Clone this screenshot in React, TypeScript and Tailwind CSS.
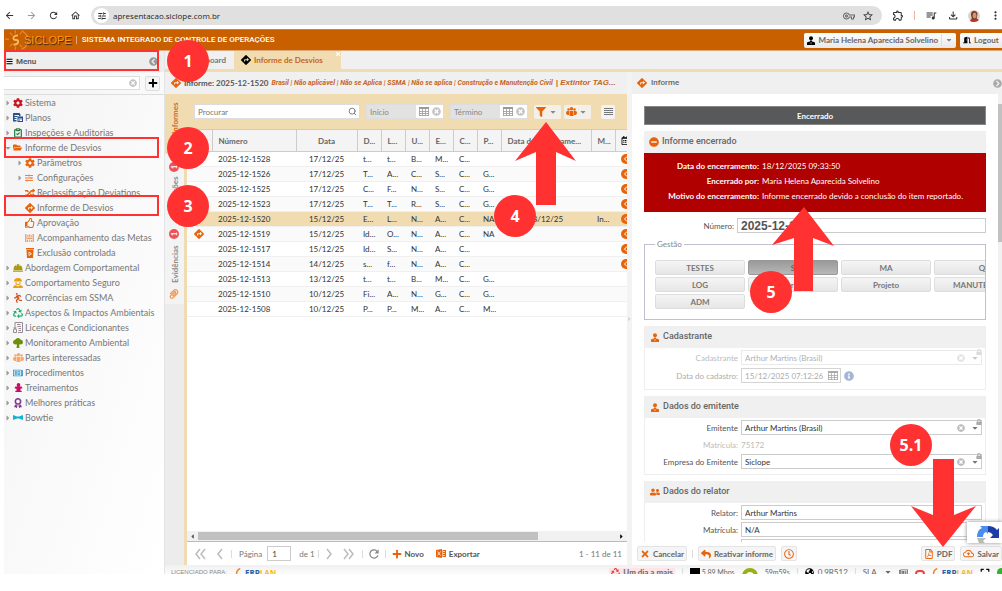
import type { ReactNode } from "react";
import { ClipboardCheck, Search } from "lucide-react";
import {
  MdArrowBack,
  MdArrowForward,
  MdRefresh,
  MdOutlineHome,
  MdTune,
  MdOutlineVpnKey,
  MdStarBorder,
  MdOutlineExtension,
  MdQueueMusic,
  MdOutlineFileDownload,
  MdMoreVert,
  MdOutlineCloudUpload,
} from "react-icons/md";
import {
  FaDirections,
  FaCog,
  FaRandom,
  FaRegThumbsUp,
  FaFilter,
  FaRecycle,
  FaTimes,
  FaPlus,
  FaReply,
  FaRegClock,
  FaPaperclip,
  FaUserFriends,
  FaCaretDown,
  FaCaretRight,
  FaFolderOpen,
  FaHardHat,
  FaRegFilePdf,
  FaRegNewspaper,
  FaAward,
  FaTimesCircle,
  FaInfoCircle,
  FaLock,
  FaSlidersH,
  FaRunning,
  FaChevronCircleLeft,
  FaChevronCircleRight,
  FaMinusCircle,
  FaGlobeAmericas,
  FaExpand,
  FaDoorOpen,
  FaBars,
  FaRegCalendarAlt,
} from "react-icons/fa";

interface TreeItem {
  label: string;
  icon: ReactNode;
  level?: number;
  leaf?: boolean;
  open?: boolean;
}

const tree: TreeItem[] = [
  { label: "Sistema", icon: <FaCog className="text-[#c8141e]" /> },
  { label: "Planos", icon: <PlansIcon /> },
  { label: "Inspeções e Auditorias", icon: <ClipboardCheck className="size-[10px] text-[#2f7d46]" strokeWidth={3} /> },
  { label: "Informe de Desvios", icon: <FaFolderOpen className="text-[9px] text-[#e8640c]" />, open: true },
  { label: "Parâmetros", icon: <FaCog className="text-[#e8640c]" />, level: 1 },
  { label: "Configurações", icon: <FaSlidersH className="text-[8px] text-[#ee8040]" />, level: 1 },
  { label: "Reclassificação Deviations", icon: <FaRandom className="text-[#e8640c]" />, level: 1, leaf: true },
  { label: "Informe de Desvios", icon: <FaDirections className="text-[#e8640c]" />, level: 1, leaf: true },
  { label: "Aprovação", icon: <FaRegThumbsUp className="text-[#e8640c]" />, level: 1, leaf: true },
  { label: "Acompanhamento das Metas", icon: <GoalsIcon />, level: 1, leaf: true },
  { label: "Exclusão controlada", icon: <BinIcon />, level: 1, leaf: true },
  { label: "Abordagem Comportamental", icon: <FaHardHat className="text-[#a89a10]" /> },
  { label: "Comportamento Seguro", icon: <WorkerIcon /> },
  { label: "Ocorrências em SSMA", icon: <FaRunning className="-scale-x-100 text-[#d4501c]" /> },
  { label: "Aspectos & Impactos Ambientais", icon: <FaRecycle className="text-[#1cb070]" /> },
  { label: "Licenças e Condicionantes", icon: <LicenseIcon /> },
  { label: "Monitoramento Ambiental", icon: <TreeIcon /> },
  { label: "Partes interessadas", icon: <GroupIcon className="text-[#f8a868]" /> },
  { label: "Procedimentos", icon: <FaRegNewspaper className="-scale-x-100 text-[#2c98cc]" /> },
  { label: "Treinamentos", icon: <TrainerIcon /> },
  { label: "Melhores práticas", icon: <FaAward className="text-[#803890]" /> },
  { label: "Bowtie", icon: <BowtieIcon /> },
];

// número, data, D, L, U, E, C, P, encerramento, M, status
const rows = [
  ["2025-12-1528", "17/12/25", "t...", "t...", "B...", "M...", "C...", "", "", "", "i"],
  ["2025-12-1526", "17/12/25", "T...", "A...", "C...", "S...", "C...", "G...", "", "", "i"],
  ["2025-12-1525", "17/12/25", "C...", "F...", "N...", "S...", "C...", "G...", "", "", "i"],
  ["2025-12-1523", "17/12/25", "T...", "T...", "R...", "S...", "C...", "G...", "", "", "i"],
  ["2025-12-1520", "15/12/25", "E...", "L...", "N...", "A...", "C...", "NA", "18/12/25", "In...", "i"],
  ["2025-12-1519", "15/12/25", "Id...", "O...", "N...", "A...", "C...", "NA", "", "", "i"],
  ["2025-12-1517", "15/12/25", "Id...", "S...", "N...", "A...", "C...", "", "", "", "i"],
  ["2025-12-1514", "14/12/25", "s...", "f...", "N...", "A...", "C...", "", "", "", "i"],
  ["2025-12-1513", "13/12/25", "t...", "t...", "B...", "M...", "C...", "G...", "", "", ""],
  ["2025-12-1510", "10/12/25", "Fi...", "A...", "N...", "G...", "C...", "G...", "", "", ""],
  ["2025-12-1508", "10/12/25", "P...", "P...", "M...", "A...", "C...", "M...", "", "", ""],
];

const headers = ["D...", "L...", "U...", "E...", "C...", "P..."];

function BowtieIcon() {
  return (
    <svg viewBox="0 0 20 10" className="h-[5px] w-[10px]" fill="#10b4d0" aria-hidden="true">
      <path d="M0 0l8 3v4l-8 3zM20 0l-8 3v4l8 3zM8 3h4v4H8z" />
    </svg>
  );
}

function PlansIcon() {
  return (
    <svg viewBox="0 0 20 18" className="h-[9px] w-[10px]" fill="#24508c" aria-hidden="true">
      <path d="M1 0h12l2 3v3h-3V4H3v2h6v2H3v2h4v2H3v2h4v3H0V1z" />
      <path d="M9 7h11v11H9zM11 11v5h7v-5z" fillRule="evenodd" />
      <path d="M12 12h2v1h-2zM15 12h2v1h-2zM12 14h2v1h-2z" />
    </svg>
  );
}

function GoalsIcon() {
  return (
    <svg viewBox="0 0 20 18" className="h-[8px] w-[9px]" fill="#f0a070" aria-hidden="true">
      <path d="M0 0h3v18H0zM17 0h3v18h-3zM4 3h3v3H4zM8 1h4v5H8zM13 3h3v3h-3zM4 8h12v3H4zM4 13h3v5H4zM9 12h2v6H9zM13 13h3v5h-3z" />
    </svg>
  );
}

function BinIcon() {
  return (
    <svg viewBox="0 0 16 20" className="ml-px h-[10px] w-2" aria-hidden="true">
      <path d="M0 0h16v3H0zM1 4h14l-1 16H2z" fill="#e8640c" />
      <path d="M6 8l5 3.500-5 3.500z" fill="none" stroke="#fff" strokeWidth="1.500" />
    </svg>
  );
}

function WorkerIcon() {
  return (
    <svg viewBox="0 0 20 20" className="size-[10px]" fill="#e8a010" aria-hidden="true">
      <path d="M2 6q1-6 8-6t8 6v1H2zM5 8h2v3q3 3 6 0V8h2v4q-5 5-10 0zM0 20q0-5 5-6l5 3 5-3q5 1 5 6z" />
    </svg>
  );
}

function LicenseIcon() {
  return (
    <svg viewBox="0 0 20 22" className="h-[11px] w-[10px]" fill="none" stroke="#8c8088" strokeWidth="1.800" aria-hidden="true">
      <path d="M4 9V1h15v20h-9M8 5h7M9 9h7M11 13h5M11 17h5M1 21v-6q3-3 6 0v6z" />
      <circle cx="4" cy="12" r="2" />
    </svg>
  );
}

function TreeIcon() {
  return (
    <svg viewBox="0 0 20 20" className="size-[10px]" fill="#6c9008" aria-hidden="true">
      <path d="M10 0q4 0 5 3 5 1 5 5 0 5-6 5h-2l1 7H7l1-7H6q-6 0-6-5 0-4 5-5 1-3 5-3z" />
    </svg>
  );
}

function GroupIcon({ className = "" }: { className?: string }) {
  return (
    <svg viewBox="0 0 22 18" className={`h-[9px] w-[11px] shrink-0 ${className}`} fill="currentColor" aria-hidden="true">
      <circle cx="11" cy="3.500" r="3.500" />
      <circle cx="5" cy="5" r="2.500" />
      <circle cx="17" cy="5" r="2.500" />
      <path d="M7 8h8v10H7zM0 11q0-3 3-3h3v8H3q-3-1-3-5zM22 11q0-3-3-3h-3v8h3q3-1 3-5z" />
    </svg>
  );
}

function TrainerIcon() {
  return (
    <svg viewBox="0 0 20 20" className="ml-px size-[9px]" fill="#cc0868" aria-hidden="true">
      <path d="M10 0q4 0 4 4t-2 4h5l2 4h-4l-1 5h3v3H3v-3h3l-1-5H1l2-4h5Q6 8 6 4t4-4z" />
    </svg>
  );
}

function ExcelIcon() {
  return (
    <svg viewBox="0 0 20 18" className="h-[9px] w-[10px] shrink-0" aria-hidden="true">
      <path d="M0 2l12-2v18L0 16zM13 2h7v14h-7z" fill="#e8640c" />
      <path d="M3 5l6 8M9 5l-6 8M14 5h4M14 9h4M14 13h4" stroke="#fff" strokeWidth="1.500" />
    </svg>
  );
}

function GridIcon({ className = "" }: { className?: string }) {
  return (
    <svg viewBox="0 0 10 9" className={`h-[9px] w-[10px] shrink-0 ${className}`} aria-hidden="true">
      <path d="M0 0h10v2H0z" fill="currentColor" />
      <path d="M.5 2v7M3.500 2v7M6.500 2v7M9.500 2v7M0 4.500h10M0 6.500h10M0 8.500h10" fill="none" stroke="currentColor" strokeWidth=".8" />
    </svg>
  );
}

function UserIcon({ className = "" }: { className?: string }) {
  return (
    <svg viewBox="0 0 16 18" className={`h-[9px] w-2 shrink-0 ${className}`} fill="currentColor" aria-hidden="true">
      <circle cx="8" cy="4.500" r="4" />
      <path d="M6 9h4v2l4.500 1q1.500.5 1.500 2v4H0v-4q0-1.500 1.500-2l4.500-1z" />
      <path d="M8 12v4" stroke="#fff" />
    </svg>
  );
}

function StatusDot() {
  return (
    <svg viewBox="0 0 20 20" className="size-[10px]" aria-hidden="true">
      <circle cx="10" cy="10" r="10" fill="#e8640c" />
      <path d="M12 5L7 10l5 5" fill="none" stroke="#fff" strokeWidth="2" />
    </svg>
  );
}

function Chevrons({ d }: { d: string }) {
  return (
    <svg viewBox="0 0 12 12" className="inline size-3" fill="none" stroke="currentColor" strokeWidth="1.500" aria-hidden="true">
      <path d={d} />
    </svg>
  );
}

function Separator() {
  return <span className="h-2 w-px shrink-0 bg-[#ddd]" />;
}

function Erplan() {
  return (
    <span className="flex items-start gap-1 font-['Open_Sans',sans-serif] text-[8px] leading-[9px] font-bold">
      <svg viewBox="0 0 8 12" className="h-[10px] w-[6px]" fill="none" stroke="#f08830" strokeWidth="2" aria-hidden="true">
        <path d="M7 0Q0 3 3 11" />
      </svg>
      <span>
        <span className="text-[#2460a8]">ERP</span>
        <span className="text-[#f8b820]">LAN</span>
      </span>
    </span>
  );
}

function BrowserBar() {
  return (
    <div className="flex h-[29px] shrink-0 items-center pt-[2px] text-[#333]">
      <div className="flex w-[91px] shrink-0 items-center gap-[11px] pl-1 text-[11px]">
        <button aria-label="Voltar"><MdArrowBack /></button>
        <button aria-label="Avançar" className="text-[#999]"><MdArrowForward /></button>
        <button aria-label="Recarregar"><MdRefresh /></button>
        <button aria-label="Página inicial"><MdOutlineHome /></button>
      </div>
      <div className="flex h-[19px] min-w-0 flex-1 items-center rounded-full bg-[#e0e0e0] pr-2 pl-[3px]">
        <span className="mr-1 flex size-[15px] shrink-0 items-center justify-center rounded-full bg-white text-[10px]">
          <MdTune />
        </span>
        <input
          aria-label="Endereço"
          className="min-w-0 flex-1 bg-transparent font-['Open_Sans',sans-serif] text-[8px] text-[#222] outline-none"
          defaultValue="apresentacao.siclope.com.br"
        />
        <MdOutlineVpnKey className="mr-[7px] text-[12px] text-[#666]" />
        <MdStarBorder className="text-[12px]" />
      </div>
      <div className="flex w-[120px] shrink-0 items-center pl-[10px] text-[13px]">
        <MdOutlineExtension />
        <span className="mx-[10px] h-[9px] w-px bg-[#f4b0a4]" />
        <MdQueueMusic />
        <MdOutlineFileDownload className="ml-[9px]" />
        <svg viewBox="0 0 12 12" className="ml-[9px] size-3 shrink-0" aria-hidden="true">
          <circle cx="6" cy="6" r="6" fill="#d8d4d0" />
          <path d="M2 11q1-3 4-3t5 2q-2 2-5 2t-4-1z" fill="#c03020" />
          <path d="M3 5q0-4 3-4t3.500 3l-1 5H4z" fill="#6a3420" />
          <ellipse cx="6.500" cy="5.500" rx="2" ry="3" fill="#d89070" />
        </svg>
        <MdMoreVert className="ml-[9px] shrink-0" />
      </div>
    </div>
  );
}

function AppHeader() {
  return (
    <header className="flex h-[22px] shrink-0 items-center overflow-hidden border-t border-b border-t-[#b08868] border-b-[#dfa878] bg-[#c86000]">
      <svg viewBox="0 0 30 22" className="h-5 w-[28px] shrink-0" fill="none" stroke="#e08c38" aria-hidden="true">
        <path d="M19 1q8 4 7 11t-7 9" strokeWidth="1.500" />
        <path d="M1 10h4M6 3l3 3M12 0v4M19 2l-2 3M6 18l3-3M12 22v-4M19 19l-2-3" strokeWidth="1.200" />
        <path d="M15 6q-5 0-5 3 0 2 3 2t2 3q-1 2-5 2" strokeWidth="2" stroke="#f8b868" />
      </svg>
      <span className="-ml-2 font-['Liberation_Sans',sans-serif] text-[11px] text-[#ff9a10] [text-shadow:1px_1px_1px_#222]">
        SICLOPE
      </span>
      <span className="mr-[5px] ml-1 h-2 w-px bg-[#e0a878]" />
      <span className="truncate font-['Roboto',sans-serif] text-[8px] font-medium text-white">
        SISTEMA INTEGRADO DE CONTROLE DE OPERAÇÕES
      </span>
      <div className="ml-auto flex h-[15px] shrink-0 gap-1 text-[8px] font-bold text-[#666]">
        <button className="flex items-center rounded-xs bg-linear-to-b from-white to-[#e8e8e8] pl-[3px]">
          <UserIcon className="mr-[3px] text-black" />
          Maria Helena Aparecida Solvelino
          <span className="mx-[3px] h-3 w-px bg-[#ddd]" />
          <FaCaretDown className="mr-[3px] text-[#888]" />
        </button>
        <button className="flex w-[42px] items-center gap-[3px] rounded-l-xs bg-linear-to-b from-white to-[#e8e8e8] pl-[3px]">
          <FaDoorOpen className="shrink-0 text-black" />
          Logout
        </button>
      </div>
    </header>
  );
}

function Sidebar() {
  return (
    <aside className="flex w-[161px] shrink-0 flex-col border-r border-[#e4e4e4] bg-linear-to-br from-[#f3f3f3] to-white">
      <div className="flex h-[21px] shrink-0 items-center bg-[#eee] pl-[2px] text-[#555]">
        <FaBars className="text-[7px] text-black" />
        <span className="ml-[3px] font-['Roboto',sans-serif] text-[8px] font-semibold">Menu</span>
        <button aria-label="Recolher menu" className="mr-[6px] ml-auto text-[9px] text-[#999]">
          <FaChevronCircleLeft />
        </button>
      </div>
      <div className="flex h-[23px] shrink-0 items-center gap-[5px] border-b border-[#ddd] pr-1">
        <div className="flex h-[14px] min-w-0 flex-1 items-center border border-l-0 border-[#ddd] bg-white pr-[2px]">
          <input aria-label="Filtrar menu" className="min-w-0 flex-1 bg-transparent text-[8px] outline-none" />
          <FaTimesCircle className="text-[8px] text-[#c4c4c4]" />
        </div>
        <button aria-label="Adicionar" className="flex size-[15px] items-center justify-center rounded-xs border border-[#ddd] bg-[#f5f5f5] text-[10px] text-black">
          <FaPlus />
        </button>
      </div>
      <ul className="text-[9px] text-[#777]">
        {tree.map((item, i) => (
          <li key={i} className={item.level ? "flex h-[15px] items-center pl-3" : "flex h-[15px] items-center"}>
            <span className="w-[9px] shrink-0 text-[8px] text-[#999]">
              {!item.leaf && (item.open ? <FaCaretDown /> : <FaCaretRight />)}
            </span>
            <span className="flex w-3 shrink-0 items-center justify-start text-[10px]">{item.icon}</span>
            <a href="#" className="whitespace-nowrap">{item.label}</a>
          </li>
        ))}
      </ul>
    </aside>
  );
}

function SideTabs() {
  return (
    <div className="w-[19px] shrink-0 bg-[#ececec] text-[8px] font-bold text-[#888]">
      <button className="flex h-[60px] w-full rotate-180 items-center justify-end bg-[#f0dcb0] pb-2 text-[#d0691c] [writing-mode:vertical-rl]">
        Informes
      </button>
      <button className="flex h-[72px] w-full rotate-180 items-center justify-end gap-1 bg-[#f3f3f3] pb-2 [writing-mode:vertical-rl]">
        Ações <span className="flex size-[10px] items-center justify-center rounded-full bg-[#f05058] text-[7px] text-white">1</span>
      </button>
      <button className="flex h-[78px] w-full rotate-180 items-center justify-end gap-[6px] bg-[#f3f3f3] pb-[3px] [writing-mode:vertical-rl]">
        <FaPaperclip className="text-[10px] text-[#f09858]" />
        Evidências
        <span className="flex size-[10px] items-center justify-center rounded-full bg-[#f05058] text-[7px] text-white">1</span>
      </button>
    </div>
  );
}

function DateField({ label }: { label: string }) {
  return (
    <div className="ml-[6px] flex h-[15px] w-[78px] shrink-0 items-center border border-[#ddd] bg-white pr-[2px] text-[#999]">
      <input
        aria-label={label}
        placeholder={label}
        className="mr-[3px] h-full w-[49px] min-w-0 bg-[#e2e2e2] pl-[3px] text-[8px] outline-none placeholder:text-[#888]"
      />
      <GridIcon />
      <FaTimesCircle className="ml-[3px] shrink-0 text-[9px] text-[#c4c4c4]" />
    </div>
  );
}

function Toolbar() {
  return (
    <div className="flex h-[35px] shrink-0 items-center bg-[#f0dcb0] pr-3 pl-[7px]">
      <div className="flex h-[15px] min-w-0 flex-1 items-center border border-[#ddd] bg-white pr-[2px]">
        <input
          aria-label="Procurar"
          placeholder="Procurar"
          className="min-w-0 flex-1 bg-transparent pl-[3px] text-[8px] outline-none placeholder:text-[#777]"
        />
        <Search className="size-[9px] text-[#777]" strokeWidth={2.5} />
      </div>
      <DateField label="Início" />
      <DateField label="Término" />
      <button aria-label="Filtro" className="ml-[6px] flex h-[14px] w-[27px] shrink-0 items-center justify-between rounded-xs bg-[#f3f0ea] px-[2px]">
        <FaFilter className="text-[10px] text-[#e8640c]" />
        <FaCaretDown className="mr-[2px] text-[8px] text-[#888]" />
      </button>
      <button aria-label="Grupos" className="ml-[3px] flex h-[14px] w-[27px] shrink-0 items-center justify-between rounded-xs bg-[#f3f0ea] px-[2px]">
        <GroupIcon className="text-[#e8640c]" />
        <FaCaretDown className="mr-[2px] text-[8px] text-[#888]" />
      </button>
      <button aria-label="Opções" className="ml-[10px] flex size-[14px] shrink-0 flex-col items-center justify-center gap-px rounded-xs bg-[#f3f3f3]">
        <span className="h-px w-[9px] bg-[#777]" />
        <span className="h-px w-[9px] bg-[#777]" />
        <span className="h-px w-[9px] bg-[#777]" />
        <span className="h-px w-[9px] bg-[#777]" />
      </button>
    </div>
  );
}

function Grid() {
  const th = "border-l border-[#ccc] pl-[6px] text-left font-bold";
  return (
    <div className="min-h-0 flex-1 overflow-hidden bg-white">
      <table className="w-[440px] min-w-full table-fixed border-collapse text-[8px] whitespace-nowrap text-[#333]">
        <colgroup>
          <col className="w-[25px]" />
          <col className="w-[84px]" />
          <col className="w-[61px]" />
          {headers.map((h) => (
            <col key={h} className="w-[24px]" />
          ))}
          <col className="w-[90px]" />
          <col className="w-[24px]" />
          <col className="w-[12px]" />
        </colgroup>
        <thead>
          <tr className="h-[22px] border-t border-b border-[#ccc] bg-[#f4f4f4] text-[#666]">
            <th />
            <th className={th}>Número</th>
            <th className="border-l border-[#ccc] text-center font-bold">Data</th>
            {headers.map((h) => (
              <th key={h} className={th}>{h}</th>
            ))}
            <th className={th}>Data do encerrame...</th>
            <th className={th}>M...</th>
            <th className="overflow-hidden border-l border-[#ccc] pl-[5px]">
              <FaRegCalendarAlt className="text-[9px] text-black" />
            </th>
          </tr>
        </thead>
        <tbody>
          {rows.map((row) => {
            const selected = row[0] === "2025-12-1520";
            return (
              <tr
                key={row[0]}
                className={selected ? "h-[15px] border-b border-[#f0f0f0] bg-[#f0dcb0]" : "h-[15px] border-b border-[#f0f0f0] even:bg-[#fafafa]"}
              >
                <td className="pl-[7px]">
                  {(selected || row[0] === "2025-12-1519") && <FaDirections className="text-[10px] text-[#e8640c]" />}
                </td>
                {row.slice(0, 10).map((cell, i) => (
                  <td key={i} className={i === 1 ? "text-center" : i === 8 ? "pl-[27px]" : "pl-[6px]"}>
                    {cell}
                  </td>
                ))}
                <td className="overflow-hidden pl-[6px]">{row[10] && <StatusDot />}</td>
              </tr>
            );
          })}
        </tbody>
      </table>
    </div>
  );
}

function Pager() {
  return (
    <div className="flex h-[24px] shrink-0 items-center border-t border-[#bbb] bg-white pr-[5px] pl-[7px] text-[8px] whitespace-nowrap text-[#777]">
      <button aria-label="Primeira página" className="w-[20px] text-left text-[#bbb]"><Chevrons d="M6 1L2 6l4 5M11 1L7 6l4 5" /></button>
      <button aria-label="Página anterior" className="w-[17px] text-left text-[#bbb]"><Chevrons d="M8 1L4 6l4 5" /></button>
      <Separator />
      <label htmlFor="page" className="mr-[5px] ml-[7px]">Página</label>
      <input id="page" defaultValue="1" className="h-[15px] w-6 border border-[#ccc] pl-1 text-[#444]" />
      <span className="mr-[3px] ml-2">de 1</span>
      <Separator />
      <button aria-label="Próxima página" className="w-[20px] text-[#bbb]"><Chevrons d="M4 1l4 5-4 5" /></button>
      <button aria-label="Última página" className="mr-[3px] w-[20px] text-[#bbb]"><Chevrons d="M1 1l4 5-4 5M6 1l4 5-4 5" /></button>
      <Separator />
      <button aria-label="Atualizar" className="mx-1 text-[14px] text-[#888]"><MdRefresh /></button>
      <Separator />
      <button className="ml-[6px] flex items-center gap-[3px] font-bold text-[#555]">
        <FaPlus className="text-[10px] text-[#e8640c]" /> Novo
      </button>
      <button className="ml-3 flex items-center gap-[3px] font-bold text-[#555]">
        <ExcelIcon /> Exportar
      </button>
      <span className="ml-auto">1 - 11 de 11</span>
    </div>
  );
}

function ListPanel() {
  return (
    <section className="flex min-w-0 flex-[462] flex-col">
      <div className="flex h-[22px] shrink-0 items-center overflow-hidden bg-[#f0f0f0] pr-2 pl-[6px] whitespace-nowrap">
        <FaDirections className="mr-[3px] shrink-0 text-[10px] text-[#e8640c]" />
        <span className="mr-[3px] text-[8px] font-bold text-[#555]">Informe: 2025-12-1520</span>
        <span className="font-['Roboto',sans-serif] text-[7px] font-bold text-[#c8641c] italic">
          Brasil | Não aplicável | Não se Aplica | SSMA | Não se aplica | Construção e Manutenção Civil
        </span>
        <span className="ml-[3px] font-['Liberation_Sans',sans-serif] text-[8px] font-bold text-[#c8641c] italic">
          | Extintor TAG...
        </span>
      </div>
      <div className="flex min-h-0 flex-1">
        <SideTabs />
        <div className="flex min-w-0 flex-1 flex-col border-l-[3px] border-[#f0dcb0]">
          <Toolbar />
          <Grid />
          <div className="flex h-[10px] shrink-0 items-center bg-[#f1f1f1] px-[2px] text-[7px] text-[#555]">
            <FaCaretRight className="rotate-180" />
            <div className="ml-[2px] h-2 w-[78%] bg-[#c1c1c1]" />
            <FaCaretRight className="ml-auto text-black" />
          </div>
          <Pager />
        </div>
      </div>
    </section>
  );
}

function SectionHeader({ icon, children }: { icon: ReactNode; children: ReactNode }) {
  return (
    <h3 className="flex h-[22px] items-center gap-[3px] bg-[#f0f0f0] pl-[5px] font-['Roboto',sans-serif] text-[9px] font-medium text-[#666]">
      <span className="flex w-[10px] justify-center text-[10px] text-[#e8640c]">{icon}</span>
      {children}
    </h3>
  );
}

interface FieldProps {
  id: string;
  label: string;
  value: string;
  combo?: boolean;
  disabled?: boolean;
}

function Field({ id, label, value, combo, disabled }: FieldProps) {
  return (
    <div className={disabled ? "flex items-center opacity-40" : "flex items-center"}>
      <label htmlFor={id} className="mr-[3px] w-[93px] shrink-0 text-right">{label}</label>
      <div className="relative flex h-[15px] min-w-0 flex-1 items-center border border-[#ccc] bg-white pr-[2px]">
        <input id={id} defaultValue={value} disabled={disabled} className="min-w-0 flex-1 bg-transparent pl-[3px] text-[#333] outline-none" />
        {combo && (
          <>
            <FaTimesCircle className="mr-[6px] text-[8px] text-[#bbb]" />
            <FaCaretDown className="text-[8px] text-[#777]" />
            <FaLock className="absolute -top-[2px] -right-px text-[6px] text-[#aaa]" />
          </>
        )}
      </div>
    </div>
  );
}

const gestao = ["TESTES", "S", "MA", "Q", "LOG", "Operação", "Projeto", "MANUTENÇÃO", "ADM"];

function ReportPanel() {
  const action = "flex h-[15px] items-center gap-[3px] rounded-xs border border-[#e4e4e4] bg-[#f5f5f5] px-[2px] whitespace-nowrap";
  return (
    <section className="flex min-w-0 flex-[370] flex-col">
      <div className="flex h-[22px] shrink-0 items-center bg-[#f0f0f0] pl-[5px] font-['Roboto',sans-serif] text-[8px] font-medium text-[#666]">
        <FaDirections className="mr-1 text-[10px] text-[#e8640c]" />
        Informe
        <button aria-label="Recolher painel" className="ml-auto text-[9px] text-[#aaa]"><FaChevronCircleRight /></button>
      </div>
      <div className="flex min-h-0 flex-1">
        <div className="min-w-0 flex-1 overflow-hidden pt-3 pr-3 pl-3 text-[8px] text-[#555]">
          <div className="flex h-[19px] items-center justify-center border border-[#888] bg-[#58595b] font-bold text-white">
            Encerrado
          </div>
          <div className="mt-[6px]">
            <SectionHeader icon={<FaMinusCircle />}>Informe encerrado</SectionHeader>
            <dl className="grid grid-cols-[115px_1fr] gap-x-[3px] bg-[#b00000] pt-[6px] pb-2 leading-[15px] whitespace-nowrap text-white">
              <dt className="text-right font-bold">Data do encerramento:</dt>
              <dd>18/12/2025 09:33:50</dd>
              <dt className="text-right font-bold">Encerrado por:</dt>
              <dd>Maria Helena Aparecida Solvelino</dd>
              <dt className="text-right font-bold">Motivo do encerramento:</dt>
              <dd>Informe encerrado devido a conclusão do item reportado.</dd>
            </dl>
          </div>
          <div className="mt-[6px] flex items-center">
            <label htmlFor="numero" className="mr-[3px] w-[90px] text-right">Número:</label>
            <input
              id="numero"
              defaultValue="2025-12-1520"
              className="h-[15px] min-w-0 flex-1 border border-[#ccc] pl-[3px] font-['Liberation_Sans',sans-serif] text-[12px] font-bold outline-none"
            />
          </div>
          <fieldset className="mt-[6px] min-w-0 overflow-hidden border border-[#c0c0d0] pb-[10px] pl-[10px]">
            <legend className="px-[2px] leading-[10px] text-[#888]">Gestão</legend>
            <div className="mt-[11px] grid w-[375px] grid-cols-[90px_90px_90px_96px] gap-x-[3px] gap-y-[2px]">
              {gestao.map((g) => (
                <button
                  key={g}
                  className={
                    g === "S"
                      ? "h-[15px] rounded-xs border border-[#999] bg-linear-to-b from-[#999] to-[#b8b8b8] font-bold text-[#666]"
                      : "h-[15px] rounded-xs border border-[#ddd] bg-linear-to-b from-[#f5f5f5] to-[#e6e6e6] font-bold text-[#777]"
                  }
                >
                  {g}
                </button>
              ))}
            </div>
          </fieldset>
          <div className="mt-[6px] border border-t-0 border-[#eee]">
            <SectionHeader icon={<UserIcon />}>Cadastrante</SectionHeader>
            <div className="space-y-[3px] pt-[2px] pr-[3px] pb-[6px]">
              <Field id="cadastrante" label="Cadastrante" value="Arthur Martins (Brasil)" combo disabled />
              <div className="flex items-center opacity-50">
                <label htmlFor="cadastro" className="mr-[3px] w-[93px] text-right">Data do cadastro:</label>
                <div className="flex h-[15px] w-[100px] items-center border border-[#aaa] pr-[2px]">
                  <input id="cadastro" defaultValue="15/12/2025 07:12:26" disabled className="min-w-0 flex-1 pl-[3px]" />
                  <GridIcon />
                </div>
                <FaInfoCircle className="ml-[3px] text-[10px] text-[#4870b0]" />
              </div>
            </div>
          </div>
          <div className="mt-[6px] border border-t-0 border-[#eee]">
            <SectionHeader icon={<UserIcon />}>Dados do emitente</SectionHeader>
            <div className="space-y-[2px] pt-[2px] pr-[3px] pb-[5px]">
              <Field id="emitente" label="Emitente" value="Arthur Martins (Brasil)" combo />
              <div className="flex h-[15px] items-center text-[#bbb]">
                <span className="mr-[3px] w-[93px] text-right">Matrícula:</span>
                75172
              </div>
              <Field id="empresa" label="Empresa do Emitente" value="Siclope" combo />
            </div>
          </div>
          <div className="mt-[6px] border border-t-0 border-[#eee]">
            <SectionHeader icon={<FaUserFriends />}>Dados do relator</SectionHeader>
            <div className="space-y-[2px] pt-[2px] pr-[3px]">
              <Field id="relator" label="Relator:" value="Arthur Martins" />
              <Field id="matricula" label="Matrícula:" value="N/A" />
              <Field id="empresa-relator" label="" value="" />
            </div>
          </div>
        </div>
        <div className="w-1 shrink-0 bg-[#f1f1f1] pt-[10px]">
          <div className="h-[138px] bg-[#c1c1c1]" />
        </div>
      </div>
      <div className="flex h-[23px] shrink-0 items-center gap-[5px] overflow-hidden bg-white pl-[5px] text-[8px] font-bold text-[#666]">
        <button className={action}><FaTimes className="text-[10px] text-[#e8640c]" />Cancelar</button>
        <Separator />
        <button className={action}><FaReply className="text-[10px] text-[#e8640c]" />Reativar informe</button>
        <button aria-label="Histórico" className={action}><FaRegClock className="text-[10px] text-[#e8640c]" /></button>
        <button className={`${action} ml-auto`}><FaRegFilePdf className="text-[10px] text-[#e8640c]" />PDF</button>
        <button className={action}><MdOutlineCloudUpload className="text-[11px] text-[#e8640c]" />Salvar</button>
      </div>
    </section>
  );
}

function StatusBar() {
  return (
    <footer className="flex h-[9px] shrink-0 items-start overflow-hidden bg-linear-to-b from-[#f0f0f0] to-[#fcfcfc] pt-[3px] pl-[6px] text-[8px] leading-[9px] whitespace-nowrap text-[#666]">
      <span className="mr-2 font-['Liberation_Sans',sans-serif] text-[6px] text-[#888]">LICENCIADO PARA:</span>
      <Erplan />
      <div className="ml-auto flex items-start gap-[7px]">
        <span className="flex gap-[3px] bg-[#fde4e6] px-[2px] font-bold">
          <FaRecycle className="text-[9px] text-[#f03838]" />
          Um dia a mais
        </span>
        <Separator />
        <span className="flex gap-[2px] text-[7px]"><span className="h-[9px] w-[10px] bg-black" />5.89 Mbps</span>
        <span className="size-[16px] rounded-full border-4 border-[#98b010]" />
        <span className="text-[7px]">59m59s</span>
        <Separator />
        <span className="flex gap-1"><FaGlobeAmericas className="text-[9px] text-black" />0.9R512</span>
        <Separator />
        <span>SLA</span>
        <FaCaretDown />
        <FaRegNewspaper className="text-[9px]" />
        <span className="mt-[2px] h-2 w-[10px] rounded-sm border-2 border-[#f04040]" />
        <Erplan />
        <FaExpand className="text-[10px] text-black" />
        <span className="-mr-1 size-[9px] rounded-full bg-[#28b828]" />
      </div>
    </footer>
  );
}

// Numbered steps of the walkthrough, drawn on top of the application
const steps = [
  { n: "1", place: "top-[40px] left-[167px]" },
  { n: "2", place: "top-[127px] left-[167px]" },
  { n: "3", place: "top-[185px] left-[167px]" },
  { n: "4", place: "top-[195px] left-[494px]" },
  { n: "5", place: "top-[271px] left-[750px]" },
  { n: "5.1", place: "top-[424px] left-[890px]" },
];

const highlights = ["top-[50px] h-[21px]", "top-[137px] h-[21px]", "top-[195px] h-[21px]"];

function Walkthrough() {
  return (
    <div className="pointer-events-none absolute inset-0 overflow-hidden">
      {highlights.map((place) => (
        <div key={place} className={`absolute left-1 w-[155px] border-2 border-[#ff3131] ${place}`} />
      ))}
      <svg viewBox="0 0 62 84" className="absolute top-[122px] left-[515px] h-[84px] w-[62px]" fill="#ff3131" aria-hidden="true">
        <path d="M31 0l30 39-20-9v53H21V30L0 39z" />
      </svg>
      <svg viewBox="0 0 62 84" className="absolute top-[207px] left-[772px] h-[84px] w-[62px]" fill="#ff3131" aria-hidden="true">
        <path d="M32 0l30 39-21-8v53H22V31L0 38z" />
      </svg>
      <svg viewBox="0 0 65 88" className="absolute top-[459px] left-[911px] h-[88px] w-[65px]" fill="#ff3131" aria-hidden="true">
        <path d="M22 0h21v56l22-9-33 41L0 47l22 9z" />
      </svg>
      {steps.map(({ n, place }) => (
        <span
          key={n}
          className={`absolute flex size-[42px] items-center justify-center rounded-full bg-[#ff3131] font-['Open_Sans',sans-serif] text-[16px] font-bold text-white ${place}`}
        >
          {n}
        </span>
      ))}
    </div>
  );
}

export default function App() {
  return (
    <div className="relative flex h-screen flex-col overflow-hidden bg-white pb-[17px] font-['Lato',sans-serif]">
      <BrowserBar />
      <div className="flex min-h-0 flex-1 flex-col pl-1">
        <AppHeader />
        <div className="flex min-h-0 flex-1">
          <Sidebar />
          <main className="flex min-w-0 flex-1 flex-col">
            <nav className="flex h-[21px] shrink-0 border-b-[3px] border-[#f0dcb0] bg-[#f0f0f0] text-[8px] font-bold">
              <a href="#" className="flex w-[69px] items-center justify-end pr-2 text-[#777]">Dashboard</a>
              <a href="#" className="flex w-[107px] items-center bg-[#f0dcb0] pl-[7px] text-[#c8641c]">
                <FaDirections className="mr-[3px] text-[10px] text-black" />
                Informe de Desvios
                <FaTimes className="ml-auto self-start text-[6px] text-white" />
              </a>
            </nav>
            <div className="relative flex min-h-0 flex-1">
              <ListPanel />
              <div className="flex w-[5px] shrink-0 items-center bg-[#f3f3f3] text-[6px] text-[#ccc]">
                <FaCaretRight />
              </div>
              <ReportPanel />
              <div className="absolute right-0 bottom-[22px] h-[21px] w-[35px] overflow-hidden bg-white shadow-[0_0_4px_#888]">
                <svg viewBox="0 0 35 21" className="h-[21px] w-[35px]" aria-hidden="true">
                  <path d="M10 15q0-7 5-9l-2-2h8v8l-2-2q-3 1-3 5z" fill="#4a8cf0" />
                  <path d="M21 4q6 0 9 4l2-2v10h-9l3-3q-2-3-5-3z" fill="#1c3ca8" />
                  <path d="M10 16h9l-3 3q3 4 8 2h-12z" fill="#b8b8b8" />
                </svg>
              </div>
            </div>
            <StatusBar />
          </main>
        </div>
      </div>
      <Walkthrough />
    </div>
  );
}
